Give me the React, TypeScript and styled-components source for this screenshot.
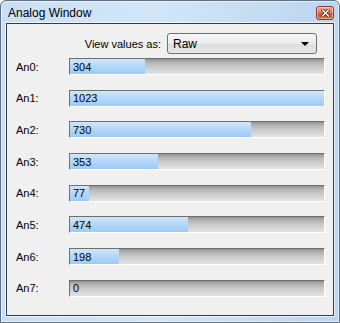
import React from 'react';
import styled, { createGlobalStyle } from 'styled-components';

const GlobalStyle = createGlobalStyle`
  html, body {
    margin: 0;
    padding: 0;
    background: #ffffff;
  }
  * {
    box-sizing: border-box;
  }
`;

const Window = styled.div`
  width: 340px;
  height: 323px;
  display: flex;
  flex-direction: column;
  border: 1px solid #5e7287;
  border-radius: 6px 6px 0 0;
  background: linear-gradient(90deg, #c9def5 0%, #d4e5f8 45%, #bcd5ef 100%);
  box-shadow: inset 0 0 0 1px rgba(255, 255, 255, 0.55);
  font-family: "Liberation Sans", Arial, sans-serif;
`;

const TitleBar = styled.div`
  height: 22px;
  display: flex;
  align-items: center;
  justify-content: space-between;
  padding: 0 5px 0 7px;
`;

const Title = styled.span`
  font-size: 12px;
  color: #000;
  padding-top: 1px;
`;

const CloseButton = styled.div`
  width: 18px;
  height: 14px;
  margin-top: 1px;
  display: flex;
  align-items: center;
  justify-content: center;
  border: 1px solid #8c3a2b;
  border-radius: 3px;
  background: linear-gradient(#eeb09c 0%, #e07e62 45%, #cc4f30 55%, #d9704f 100%);
  box-shadow: inset 0 0 0 1px rgba(255, 215, 200, 0.55);
`;

const Client = styled.div`
  flex: 1;
  margin: 0 5px 6px 5px;
  border: 1px solid #2f3b48;
  background: #f0f0f0;
  box-shadow: 0 0 0 1px rgba(255, 255, 255, 0.7);
  display: flex;
  flex-direction: column;
`;

const ViewRow = styled.div`
  margin-top: 9px;
  height: 21px;
  display: flex;
  align-items: center;
  justify-content: flex-end;
  gap: 6px;
  padding-right: 16px;
  font-size: 11px;
`;

const Select = styled.div`
  width: 150px;
  height: 21px;
  display: flex;
  align-items: center;
  justify-content: space-between;
  padding: 0 7px 0 5px;
  border: 1px solid #707070;
  border-radius: 3px;
  background: linear-gradient(#f6f6f6 0%, #ebebeb 50%, #dddddd 51%, #e6e6e6 100%);
  font-size: 12px;
`;

const Arrow = styled.span`
  width: 0;
  height: 0;
  border-left: 4px solid transparent;
  border-right: 4px solid transparent;
  border-top: 4px solid #000;
`;

const Rows = styled.div`
  margin-top: 4px;
  display: flex;
  flex-direction: column;
  gap: 14.7px;
  padding-left: 9px;
`;

const Row = styled.div`
  height: 17px;
  display: flex;
  align-items: center;
`;

const Label = styled.span`
  width: 53px;
  font-size: 11px;
  color: #000;
`;

const Bar = styled.div`
  position: relative;
  width: 256px;
  height: 17px;
  border-top: 1px solid #6e6e6e;
  border-left: 1px solid #6e6e6e;
  border-right: 1px solid #ffffff;
  border-bottom: 1px solid #ffffff;
  background: linear-gradient(#8f8f8f 0%, #b2b2b2 20%, #cccccc 55%, #e2e2e2 100%);
`;

const Fill = styled.div`
  height: 100%;
  background: linear-gradient(#cfe6fc 0%, #b5d9f9 45%, #9ccaf4 100%);
`;

const Value = styled.span`
  position: absolute;
  left: 3px;
  top: 0;
  bottom: 0;
  display: flex;
  align-items: center;
  font-size: 11px;
  color: #000;
`;

const channels = [304, 1023, 730, 353, 77, 474, 198, 0];

const App = () => {
  return (
    <>
      <GlobalStyle />
      <Window>
        <TitleBar>
          <Title>Analog Window</Title>
          <CloseButton>
            <svg width="9" height="8" viewBox="0 0 9 8">
              <path d="M1.5 1 L7.5 7 M7.5 1 L1.5 7" stroke="#3a2a28" strokeWidth="3" strokeLinecap="square" />
              <path d="M1.5 1 L7.5 7 M7.5 1 L1.5 7" stroke="#ffffff" strokeWidth="1.4" strokeLinecap="square" />
            </svg>
          </CloseButton>
        </TitleBar>
        <Client>
          <ViewRow>
            <span>View values as:</span>
            <Select>
              <span>Raw</span>
              <Arrow />
            </Select>
          </ViewRow>
          <Rows>
            {channels.map((v, i) => (
              <Row key={i}>
                <Label>An{i}:</Label>
                <Bar>
                  <Fill style={{ width: `${(v / 1023) * 100}%` }} />
                  <Value>{v}</Value>
                </Bar>
              </Row>
            ))}
          </Rows>
        </Client>
      </Window>
    </>
  );
};

export default App;
